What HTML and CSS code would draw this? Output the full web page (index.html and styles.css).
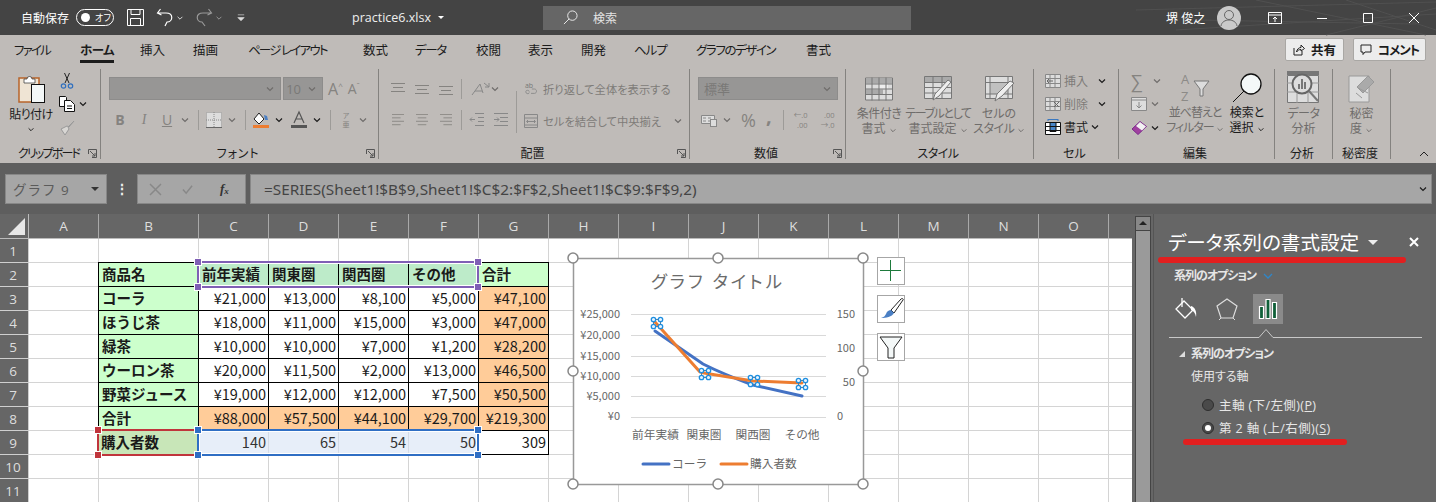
FILE: index.html
```html
<!DOCTYPE html>
<html lang="ja">
<head>
<meta charset="utf-8">
<title>practice6.xlsx - Excel</title>
<link rel="stylesheet" href="styles.css">
</head>
<body>
<svg class="sprite" aria-hidden="true">
  <symbol id="chev" viewBox="0 0 10 6"><path d="M2 1.500l3 3 3-3" fill="none" stroke="currentColor" stroke-width="1.200"/></symbol>
  <symbol id="launch" viewBox="0 0 9 9"><path d="M.5 5V.5H8.500V8.500H4M2 2l5 5M7 4v3H4" fill="none" stroke="currentColor"/></symbol>
  <symbol id="al-top" viewBox="0 0 14 12"><path d="M0 .5h14M2 4.500h10M0 8.500h14" stroke="currentColor"/></symbol>
  <symbol id="al-mid" viewBox="0 0 14 12"><path d="M0 2.500h14M2 6.500h10M0 10.500h14" stroke="currentColor"/></symbol>
  <symbol id="al-bot" viewBox="0 0 14 12"><path d="M0 3.500h14M2 7.500h10M0 11.500h14" stroke="currentColor"/></symbol>
  <symbol id="al-l" viewBox="0 0 14 14"><path d="M0 .5h14M0 4.500h10M0 8.500h14M0 12.500h10" stroke="currentColor"/></symbol>
  <symbol id="al-c" viewBox="0 0 14 14"><path d="M0 .5h14M2 4.500h10M0 8.500h14M2 12.500h10" stroke="currentColor"/></symbol>
  <symbol id="al-r" viewBox="0 0 14 14"><path d="M0 .5h14M4 4.500h10M0 8.500h14M4 12.500h10" stroke="currentColor"/></symbol>
</svg>

<header class="titlebar">
  <svg class="tb-lines" viewBox="0 0 300 35" aria-hidden="true"><path d="M0 10L300 2M40 30L300 14M120 0L290 35M190 35L300 8M60 20L280 24M210 0L300 30" stroke="#505050" fill="none"/></svg>
  <span class="tb-auto">自動保存</span>
  <span class="toggle"><i></i><b>オフ</b></span>
  <svg class="tb-save" viewBox="0 0 17 17"><path d="M.5.5h16v16H.5zM4 .5v5h9v-5M3.500 16.500v-7h10v7" fill="none" stroke="#fff"/></svg>
  <svg class="tb-undo" viewBox="0 0 17 19"><path d="M4.500 1L1.500 5l4 2M2 5h8c8 0 7 9 1 9l-2 4" fill="none" stroke="#fff" stroke-width="1.200"/></svg>
  <svg class="chev-s tb-c1"><use href="#chev"/></svg>
  <svg class="tb-redo" viewBox="0 0 17 19"><path d="M12.500 1l3 4-4 2M15 5H7c-8 0-7 9-1 9l3 4" fill="none" stroke="#999" stroke-width="1.200"/></svg>
  <svg class="chev-s tb-c2"><use href="#chev"/></svg>
  <svg class="tb-custom" viewBox="0 0 10 9"><path d="M1 .5h8M1 4l4 4 4-4z" stroke="#ddd" fill="#ddd" stroke-width=".8"/></svg>
  <span class="tb-file">practice6.xlsx</span>
  <i class="caret tb-caret"></i>
  <div class="search">
    <svg viewBox="0 0 16 16"><circle cx="10" cy="6" r="5" fill="none" stroke="#eee"/><path d="M6.500 9.500L1 15" stroke="#eee"/></svg>
    <span>検索</span>
  </div>
  <span class="tb-user">堺 俊之</span>
  <span class="avatar"><svg viewBox="0 0 24 24"><circle cx="12" cy="9" r="4.500" fill="none" stroke="#666"/><path d="M4 20c1-8 15-8 16 0" fill="none" stroke="#666"/></svg></span>
  <svg class="win win-ribbon" viewBox="0 0 14 12"><path d="M.5.5h13v11H.5zM.5 3h13M7 10V5M5 7l2-2 2 2" fill="none" stroke="#fff"/></svg>
  <svg class="win win-min" viewBox="0 0 10 10"><path d="M0 5.500h10" stroke="#fff"/></svg>
  <svg class="win win-max" viewBox="0 0 10 10"><path d="M.5.5h9v9h-9z" fill="none" stroke="#fff"/></svg>
  <svg class="win win-close" viewBox="0 0 10 10"><path d="M0 0l10 10M10 0L0 10" stroke="#fff"/></svg>
</header>

<nav class="tabs">
  <div class="tablist">
    <span class="ls4">ファイル</span><span class="active ls1">ホーム</span><span>挿入</span><span>描画</span><span class="ls4">ページ レイアウト</span><span>数式</span><span class="ls3">データ</span><span>校閲</span><span>表示</span><span>開発</span><span class="ls2">ヘルプ</span><span class="ls3">グラフのデザイン</span><span>書式</span>
  </div>
  <button class="tbtn share"><svg viewBox="0 0 12 12"><path d="M1 4v7h8V7M3.500 8C4 5 6 3.500 8 3.500V1l3.500 3.500L8 7V5.500C6 5.500 4.500 6.500 3.500 8z" fill="none" stroke="#222"/></svg>共有</button>
  <button class="tbtn comment"><svg viewBox="0 0 12 12"><path d="M1 1h10v7H5L3 10.500V8H1z" fill="none" stroke="#222"/></svg><span class="ls2">コメント</span></button>
</nav>

<section class="ribbon">
  <div class="group">
    <div class="gbody clip">
      <div class="bigbtn paste">
        <svg class="ic-paste" viewBox="0 0 27 30"><rect x="1" y="5" width="20" height="24" fill="#efe4d4" stroke="#b8642a" stroke-width="1.500"/><path d="M6 6h3a2.500 2.500 0 0 1 5 0h3v4H6z" fill="#fff" stroke="#444" stroke-width=".8"/><rect x="13.500" y="11.500" width="13" height="18" fill="#f4f8f8" stroke="#111"/></svg>
        <span class="on ls1">貼り付け</span>
        <svg class="chev-s on"><use href="#chev"/></svg>
      </div>
      <div class="clipcol">
        <div class="rowline"><svg class="ic16" viewBox="0 0 16 16"><path d="M5.500 0L10 10M10.500 0L6 10" stroke="#222" fill="none"/><circle cx="4.500" cy="13" r="2.200" fill="none" stroke="#2f6fbf" stroke-width="1.200"/><circle cx="11.500" cy="13" r="2.200" fill="none" stroke="#2f6fbf" stroke-width="1.200"/></svg></div>
        <div class="rowline"><svg class="ic16" viewBox="0 0 16 16"><path d="M.5.5h6l1 1v9h-7z" fill="#fff" stroke="#111"/><path d="M5.500 4.500h6l4 4v7h-10z" fill="#fff" stroke="#111"/><path d="M8 10h5M8 12.500h5" stroke="#111"/></svg><svg class="chev-s on ml3"><use href="#chev"/></svg></div>
        <div class="rowline"><svg class="ic16" viewBox="0 0 16 16"><path d="M15 1l-5 6-2-1-6 3 4 6 4-6-1-2z" fill="#d8d6d3" stroke="#999"/></svg></div>
      </div>
    </div>
    <div class="glabel"><span></span><span class="on ls4">クリップボード</span><svg class="launch"><use href="#launch"/></svg></div>
  </div>

  <div class="group">
    <div class="gbody pad8">
      <div class="frow r1">
        <div class="select w172"><svg class="chev-s"><use href="#chev"/></svg></div>
        <div class="select w40 ml2"><span class="seltxt">10</span><svg class="chev-s"><use href="#chev"/></svg></div>
        <span class="bigA ml5">A<sup>^</sup></span>
        <span class="midA ml5">A<sup>ˇ</sup></span>
      </div>
      <div class="frow r2 pl3">
        <b class="glyph w16">B</b>
        <i class="glyph w16 ml8 serif">I</i>
        <u class="glyph w16 ml7">U</u>
        <svg class="chev-s ml5"><use href="#chev"/></svg>
        <i class="vsep ml8"></i>
        <svg class="ic16 ml7" viewBox="0 0 16 16"><path d="M.5.5h15v15H.5z" fill="#ddd" stroke="#999" stroke-dasharray="1 1"/><path d="M0 15.500h16" stroke="#666"/><path d="M8 0v16M0 8h16" stroke="#888" stroke-dasharray="1 1"/></svg>
        <svg class="chev-s ml5"><use href="#chev"/></svg>
        <i class="vsep ml8"></i>
        <svg class="ic16 ml7" viewBox="0 0 16 16"><path d="M6 1L1 7l5 5 5-5z" fill="#fff" stroke="#222"/><path d="M11 3l3 1 1 4h-3z" fill="#4a7fc4"/><rect y="13" width="16" height="3" fill="#ed7d31"/></svg>
        <svg class="chev-s on ml5"><use href="#chev"/></svg>
        <svg class="ic16 ml7" viewBox="0 0 16 16"><path d="M3 11L8 0l5 11M5 7h6" fill="none" stroke="#555" stroke-width="1.200"/><rect y="13" width="16" height="3" fill="#555"/></svg>
        <svg class="chev-s on ml5"><use href="#chev"/></svg>
        <i class="vsep ml8"></i>
        <span class="furi ml8">ア<br>亜</span>
        <svg class="chev-s ml5"><use href="#chev"/></svg>
      </div>
    </div>
    <div class="glabel"><span></span><span class="on wide">フォント</span><svg class="launch"><use href="#launch"/></svg></div>
  </div>

  <div class="group">
    <div class="gbody pad8 algn">
      <div class="al-left">
        <div class="frow r1">
          <svg class="alg"><use href="#al-top"/></svg><svg class="alg ml10"><use href="#al-mid"/></svg><svg class="alg ml10"><use href="#al-bot"/></svg>
          <i class="vsep ml8"></i>
          <svg class="ic20 ml8" viewBox="0 0 20 16"><path d="M2 14L10 3l3 9M5 10h7" fill="none" stroke="#888"/><path d="M14 2l5 4M19 2v4h-4" fill="none" stroke="#888"/></svg>
          <svg class="chev-s"><use href="#chev"/></svg>
        </div>
        <div class="frow r2">
          <svg class="alg"><use href="#al-l"/></svg><svg class="alg ml10"><use href="#al-c"/></svg><svg class="alg ml10"><use href="#al-r"/></svg>
          <i class="vsep ml8"></i>
          <svg class="ic14 ml8" viewBox="0 0 14 14"><path d="M5 .5h9M8 4.500h6M8 8.500h6M5 12.500h9M5 6.500H0M2 4.500l-2 2 2 2" fill="none" stroke="#888"/></svg>
          <svg class="ic14 ml10" viewBox="0 0 14 14"><path d="M0 .5h14M6 4.500h8M6 8.500h8M0 12.500h14M0 6.500h5M3 4.500l2 2-2 2" fill="none" stroke="#888"/></svg>
        </div>
      </div>
      <i class="vsep tall"></i>
      <div class="al-right">
        <div class="wrapline"><svg class="ic14" viewBox="0 0 14 16"><text x="0" y="7" class="mini">ab</text><path d="M1 11c0-2 4-2 4 0M1 11c0 3 4 3 4 1M7 13h4c3 0 3-5 0-5H8" fill="none" stroke="#888"/></svg><span>折り返して全体を表示する</span></div>
        <div class="wrapline"><svg class="ic14" viewBox="0 0 14 14"><path d="M.5.5h13v13H.5zM0 4h14M0 11h14M3 7.500h8M4 6L2.500 7.500 4 9M10 6l1.500 1.500L10 9" fill="none" stroke="#888"/></svg><span>セルを結合して中央揃え</span><svg class="chev-s ml7"><use href="#chev"/></svg></div>
      </div>
    </div>
    <div class="glabel"><span></span><span class="on">配置</span><svg class="launch"><use href="#launch"/></svg></div>
  </div>

  <div class="group">
    <div class="gbody pad8">
      <div class="frow r1"><div class="select w140 lefttxt"><span class="seltxt">標準</span><svg class="chev-s"><use href="#chev"/></svg></div></div>
      <div class="frow r2 pl3">
        <svg class="ic16" viewBox="0 0 16 14"><path d="M.5 2.500h13v8H.5z" fill="#ddd" stroke="#888"/><path d="M2 5h3M2 8h3M7 5h3M7 8h2" stroke="#888"/><rect x="9.500" y="6.500" width="6" height="7" fill="#ddd" stroke="#888"/></svg>
        <svg class="chev-s ml5"><use href="#chev"/></svg>
        <span class="pct">%</span>
        <span class="comma">,</span>
        <i class="vsep sep-num"></i>
        <span class="dec ml8">←.0<br>.00</span>
        <span class="dec dec2">.00<br>→.0</span>
      </div>
    </div>
    <div class="glabel"><span></span><span class="on">数値</span><svg class="launch"><use href="#launch"/></svg></div>
  </div>

  <div class="group">
    <div class="gbody styles">
      <div class="bigbtn w60">
        <svg class="ic-big" viewBox="0 0 28 23"><path d="M.5.500h27v22H.5z" fill="#ddd" stroke="#777"/><path d="M1 1h26v5H1zM1 12h17v5H1z" fill="#aaa"/><path d="M14 6.500h9v5h-9z" fill="#eee"/><path d="M0 6.500h28M0 11.500h28M0 17h28M7 0v23M14 0v23M21 0v23" stroke="#777" fill="none"/></svg>
        <span class="ls1">条件付き</span><span>書式 <svg class="chev-s"><use href="#chev"/></svg></span>
      </div>
      <div class="bigbtn w58">
        <svg class="ic-big" viewBox="0 0 28 26"><path d="M.5.500h27v22H.5z" fill="#ddd" stroke="#777"/><path d="M1 1h26v5H1z" fill="#aaa"/><path d="M0 6.500h28M0 11.500h28M0 17h28M9 0v23M18 0v23" stroke="#777" fill="none"/><path d="M27 6L15 20l-6 4 2-6L24 4z" fill="#eee" stroke="#777"/></svg>
        <span class="ls3">テーブルとして</span><span>書式設定 <svg class="chev-s"><use href="#chev"/></svg></span>
      </div>
      <div class="bigbtn w64">
        <svg class="ic-big" viewBox="0 0 28 26"><path d="M.5.500h27v22H.5z" fill="#ddd" stroke="#777"/><path d="M5 6h18v12H5z" fill="#c0c0c0"/><path d="M0 6.500h28M5 0v23M23 0v23M0 18h28" stroke="#777" fill="none"/><path d="M29 7L17 20l-7 5 2-7L25 5z" fill="#eee" stroke="#777"/></svg>
        <span>セルの</span><span class="ls1">スタイル <svg class="chev-s"><use href="#chev"/></svg></span>
      </div>
    </div>
    <div class="glabel"><span></span><span class="on ls1">スタイル</span><span></span></div>
  </div>

  <div class="group">
    <div class="gbody cells">
      <div class="cellrow"><svg class="ic16" viewBox="0 0 16 14"><path d="M.5.500h15v13H.5zM0 4.500h16M0 9.500h16M5 0v14M10 0v14" fill="#ddd" stroke="#888"/><path d="M8 7H2M4 5L2 7l2 2" stroke="#666" fill="none"/></svg><span>挿入</span><svg class="chev-s on"><use href="#chev"/></svg></div>
      <div class="cellrow"><svg class="ic16" viewBox="0 0 16 14"><path d="M.5.500h15v13H.5zM0 4.500h16M0 9.500h16M5 0v14M10 0v14" fill="#ddd" stroke="#888"/><path d="M9 5l5 5M14 5l-5 5" stroke="#666" fill="none"/></svg><span>削除</span><svg class="chev-s on"><use href="#chev"/></svg></div>
      <div class="cellrow on"><svg class="ic16" viewBox="0 0 16 16"><path d="M.5 3.500h15v12H.5z" fill="#fff" stroke="#111"/><path d="M5 3.500h6v9H5z" fill="#4a86c8" stroke="#111"/><path d="M0 7.500h16M0 11.500h16" stroke="#111"/><path d="M3 .5h10M3 0v2M13 0v2" stroke="#3a78c0"/></svg><span>書式</span><svg class="chev-s on cshift"><use href="#chev"/></svg></div>
    </div>
    <div class="glabel"><span></span><span class="on">セル</span><span></span></div>
  </div>

  <div class="group">
    <div class="gbody edit">
      <div class="editcol">
        <div class="rowline"><span class="sigma">∑</span><svg class="chev-s ml5"><use href="#chev"/></svg></div>
        <div class="rowline"><svg class="ic16" viewBox="0 0 16 14"><path d="M.5.500h15v13H.5z" fill="#ddd" stroke="#888"/><path d="M0 3h16" stroke="#888"/><path d="M8 5v6M5.500 8.500L8 11l2.500-2.500" stroke="#888" fill="none"/></svg><svg class="chev-s ml3"><use href="#chev"/></svg></div>
        <div class="rowline"><svg class="ic16" viewBox="0 0 16 14"><path d="M9 .5l6.500 5L7 13.500 1 8z" fill="#a040a0" stroke="#7a2a8a"/><path d="M9 1l6 4.500-4 4-6-4.500z" fill="#f2f2f2"/></svg><svg class="chev-s on ml3"><use href="#chev"/></svg></div>
      </div>
      <div class="bigbtn w60">
        <svg class="ic-sort" viewBox="0 0 30 28"><text x="1" y="11" class="az">A</text><text x="1" y="28" class="az">Z</text><path d="M14 8h15l-6 8v7h-3v-7z" fill="#ddd" stroke="#777"/></svg>
        <span class="ls2">並べ替えと</span><span class="ls2">フィルター <svg class="chev-s"><use href="#chev"/></svg></span>
      </div>
      <div class="bigbtn w44 on">
        <svg class="ic-find" viewBox="0 0 30 30"><circle cx="19" cy="11" r="10" fill="#f4f8f8" stroke="#111" stroke-width="1.300"/><path d="M12 18L1 29" stroke="#111"/></svg>
        <span>検索と</span><span>選択 <svg class="chev-s"><use href="#chev"/></svg></span>
      </div>
    </div>
    <div class="glabel"><span></span><span class="on">編集</span><span></span></div>
  </div>

  <div class="group">
    <div class="gbody single">
      <div class="bigbtn">
        <svg class="ic-ana" viewBox="0 0 32 32"><path d="M.5 4.500h31v27H.5z" fill="#ddd" stroke="#777"/><rect width="32" height="4" fill="#777"/><path d="M0 12h32M0 21h32M10 4v28M21 4v28" stroke="#999"/><circle cx="15" cy="13" r="9.500" fill="#ddd" stroke="#666" stroke-width="2"/><path d="M11 18v-5h2v5zM14 18V8h2v10zM17 18v-7h2v7z" fill="#777"/><path d="M22 20l9 10" stroke="#777" stroke-width="2"/></svg>
        <span class="ls1">データ</span><span>分析</span>
      </div>
    </div>
    <div class="glabel"><span></span><span class="on">分析</span><span></span></div>
  </div>

  <div class="group">
    <div class="gbody single">
      <div class="bigbtn">
        <svg class="ic-sec" viewBox="0 0 28 29"><path d="M1 3h20v26H1z" fill="#ddd" stroke="#999"/><path d="M9 14L20 3l6 6-11 11z" fill="#aaa" stroke="#999"/><path d="M10 15l10 5M8 20l6 5" stroke="#999"/></svg>
        <span>秘密</span><span>度 <svg class="chev-s"><use href="#chev"/></svg></span>
      </div>
    </div>
    <div class="glabel"><span></span><span class="on">秘密度</span><span></span></div>
  </div>

  <svg class="collapse" viewBox="0 0 10 6"><path d="M1 5l4-4 4 4" fill="none" stroke="#222"/></svg>
</section>

<section class="formula">
  <div class="namebox"><span>グラフ 9</span><i class="caret dark"></i></div>
  <span class="fdots">⋮</span>
  <div class="fbtns">
    <svg viewBox="0 0 10 10"><path d="M0 0l10 10M10 0L0 10" stroke="#888" stroke-width="1.300"/></svg>
    <svg viewBox="0 0 12 10"><path d="M1 5l3.500 4L11 1" fill="none" stroke="#888" stroke-width="1.600"/></svg>
    <span class="fx">f<sub>x</sub></span>
  </div>
  <div class="finput"><span>=SERIES(Sheet1!$B$9,Sheet1!$C$2:$F$2,Sheet1!$C$9:$F$9,2)</span><svg class="chev-s on"><use href="#chev"/></svg></div>
</section>

<main class="workspace">
  <div class="sheet">
    <div class="colheads">
      <div class="corner"><i></i></div>
      <span>A</span><span class="wb">B</span><span>C</span><span>D</span><span>E</span><span>F</span><span>G</span><span>H</span><span>I</span><span>J</span><span>K</span><span>L</span><span>M</span><span>N</span><span>O</span><span class="rest"></span>
    </div>
    <div class="sheetbody">
      <div class="rowheads">
        <span>1</span><span>2</span><span>3</span><span>4</span><span>5</span><span>6</span><span>7</span><span>8</span><span>9</span><span>10</span><span>11</span>
      </div>
      <div class="cells-area">
        <div class="gridcols">
          <i></i><i class="wb"></i><i></i><i></i><i></i><i></i><i></i><i></i><i></i><i></i><i></i><i></i><i></i><i></i><i></i>
        </div>
        <div class="table">
          <div class="c lab top">商品名</div><div class="c lab top sel-p">前年実績</div><div class="c lab top sel-p">関東圏</div><div class="c lab top sel-p">関西圏</div><div class="c lab top sel-p">その他</div><div class="c lab top">合計</div>
          <div class="c lab">コーラ</div><div class="c num">¥21,000</div><div class="c num">¥13,000</div><div class="c num">¥8,100</div><div class="c num">¥5,000</div><div class="c num or">¥47,100</div>
          <div class="c lab">ほうじ茶</div><div class="c num">¥18,000</div><div class="c num">¥11,000</div><div class="c num">¥15,000</div><div class="c num">¥3,000</div><div class="c num or">¥47,000</div>
          <div class="c lab">緑茶</div><div class="c num">¥10,000</div><div class="c num">¥10,000</div><div class="c num">¥7,000</div><div class="c num">¥1,200</div><div class="c num or">¥28,200</div>
          <div class="c lab">ウーロン茶</div><div class="c num">¥20,000</div><div class="c num">¥11,500</div><div class="c num">¥2,000</div><div class="c num">¥13,000</div><div class="c num or">¥46,500</div>
          <div class="c lab">野菜ジュース</div><div class="c num">¥19,000</div><div class="c num">¥12,000</div><div class="c num">¥12,000</div><div class="c num">¥7,500</div><div class="c num or">¥50,500</div>
          <div class="c lab">合計</div><div class="c num or">¥88,000</div><div class="c num or">¥57,500</div><div class="c num or">¥44,100</div><div class="c num or">¥29,700</div><div class="c num or">¥219,300</div>
          <div class="c lab buy">購入者数</div><div class="c num sel-b">140</div><div class="c num sel-b">65</div><div class="c num sel-b">54</div><div class="c num sel-b">50</div><div class="c num">309</div>

          <div class="range r-purple"><i class="tl"></i><i class="tr"></i><i class="bl"></i><i class="br"></i></div>
          <div class="range r-red"><i class="tl"></i><i class="bl"></i></div>
          <div class="range r-blue"><i class="tl"></i><i class="tr"></i><i class="bl"></i><i class="br"></i></div>
        </div>

        <svg class="chart" viewBox="560 245 360 255" role="img" aria-label="グラフ">
          <rect x="573.500" y="258.500" width="290" height="226" fill="#fff" stroke="#999" stroke-width="1.500"/>
          <text x="718" y="288" class="ct-title" text-anchor="middle">グラフ タイトル</text>
          <path d="M631 314.500h195M631 335.500h195M631 356.500h195M631 376.500h195M631 396.500h195M631 417.500h195" stroke="#d9d9d9"/>
          <g class="ct-txt" text-anchor="end">
            <text x="620" y="318">¥25,000</text><text x="620" y="339">¥20,000</text><text x="620" y="360">¥15,000</text><text x="620" y="380">¥10,000</text><text x="620" y="400">¥5,000</text><text x="620" y="420">¥0</text>
          </g>
          <g class="ct-txt" text-anchor="end">
            <text x="855" y="318">150</text><text x="855" y="352">100</text><text x="855" y="386">50</text><text x="843" y="420">0</text>
          </g>
          <g class="ct-txt ct-x" text-anchor="middle">
            <text x="655.500" y="439">前年実績</text><text x="704" y="439">関東圏</text><text x="753" y="439">関西圏</text><text x="802" y="439">その他</text>
          </g>
          <path d="M655 331L703 364Q725 375 753 385L802 396" fill="none" stroke="#4472c4" stroke-width="3" stroke-linecap="round"/>
          <path d="M655 322L700 372Q702 373 704 373L753 381L802 383" fill="none" stroke="#ed7d31" stroke-width="3" stroke-linecap="round"/>
          <g class="markers">
            <path d="M653.500 319.500h7v7h-7zM701.500 370.500h7v7h-7zM750.500 377.500h7v7h-7zM798.500 380.500h7v7h-7z"/>
            <circle cx="653.500" cy="319.500" r="2.200"/><circle cx="660.500" cy="319.500" r="2.200"/><circle cx="653.500" cy="326.500" r="2.200"/><circle cx="660.500" cy="326.500" r="2.200"/>
            <circle cx="701.500" cy="370.500" r="2.200"/><circle cx="708.500" cy="370.500" r="2.200"/><circle cx="701.500" cy="377.500" r="2.200"/><circle cx="708.500" cy="377.500" r="2.200"/>
            <circle cx="750.500" cy="377.500" r="2.200"/><circle cx="757.500" cy="377.500" r="2.200"/><circle cx="750.500" cy="384.500" r="2.200"/><circle cx="757.500" cy="384.500" r="2.200"/>
            <circle cx="798.500" cy="380.500" r="2.200"/><circle cx="805.500" cy="380.500" r="2.200"/><circle cx="798.500" cy="387.500" r="2.200"/><circle cx="805.500" cy="387.500" r="2.200"/>
          </g>
          <path d="M643 464h26" stroke="#4472c4" stroke-width="3" stroke-linecap="round"/>
          <text x="672" y="468" class="ct-txt ct-l">コーラ</text>
          <path d="M721 464h26" stroke="#ed7d31" stroke-width="3" stroke-linecap="round"/>
          <text x="750" y="468" class="ct-txt ct-l">購入者数</text>
          <g class="handles">
            <circle cx="573" cy="258" r="5"/><circle cx="718" cy="258" r="5"/><circle cx="863" cy="258" r="5"/>
            <circle cx="573" cy="371" r="5"/><circle cx="863" cy="371" r="5"/>
            <circle cx="573" cy="484" r="5"/><circle cx="718" cy="484" r="5"/><circle cx="863" cy="484" r="5"/>
          </g>
          <g class="sidebtns">
            <rect x="877.500" y="257.500" width="27" height="27"/><rect x="877.500" y="295.500" width="27" height="27"/><rect x="877.500" y="333.500" width="27" height="27"/>
          </g>
          <path d="M880 270.500h21M890.500 260v21" stroke="#1e7a3c" fill="none"/>
          <path d="M901 299c1-1 3 0 2 1l-9 13-3-3z" fill="#fff" stroke="#222"/>
          <path d="M891 310l3 3c-2 4-8 5-13 5 3-1 4-2 5-4 1-3 3-4 5-4z" fill="#4a7fc4"/>
          <path d="M880 337h22l-8 11v10h-6v-10z" fill="#f4f8f8" stroke="#222"/>
        </svg>
      </div>
    </div>
  </div>

  <div class="vscroll"><div class="vs-up"></div><div class="vs-thumb"></div></div>

  <aside class="pane">
    <div class="pane-head">
      <h1>データ系列の書式設定</h1>
      <i class="caret light"></i>
      <svg class="pane-x" viewBox="0 0 10 10"><path d="M1 1l8 8M9 1L1 9" stroke="#fff" stroke-width="2"/></svg>
    </div>
    <div class="redline long"></div>
    <div class="pane-opt"><b class="ls2">系列のオプション</b><svg viewBox="0 0 10 6"><path d="M1 1l4 4 4-4" fill="none" stroke="#2f86c8" stroke-width="1.300"/></svg></div>
    <div class="pane-icons">
      <span class="pi"><svg viewBox="0 0 24 24"><path d="M10 4l9 9-8 8-9-9z" fill="none" stroke="#fff" stroke-width="1.300"/><path d="M8 1v9" stroke="#fff" stroke-width="1.300"/><path d="M17 9c4 1 6 6 5 11-1-4-2-6-5-7z" fill="#fff"/></svg></span>
      <span class="pi"><svg viewBox="0 0 24 24"><path d="M12 2l10 7-4 12H6L2 9z" fill="none" stroke="#ddd" stroke-width="1.200"/><path d="M6 21l-2 2M18 21l2 2" stroke="#ddd"/></svg></span>
      <span class="pi sel"><svg viewBox="0 0 20 22"><path d="M1.500 8.500h4v12h-4zM8 1.500h4v19H8zM14.500 4.500h4v16h-4z" fill="#0f5f38" stroke="#fff" stroke-width="1.200"/></svg></span>
    </div>
    <svg class="pane-rule" viewBox="0 0 253 9"><path d="M0 8.500h90l7-8 7 8h149" fill="none" stroke="#c8c8c8"/></svg>
    <div class="pane-sec"><i></i><b class="ls2">系列のオプション</b></div>
    <div class="pane-sub">使用する軸</div>
    <label class="radio"><i class="dot"></i><span>主軸 (下/左側)(<u>P</u>)</span></label>
    <label class="radio"><i class="dot on"></i><span>第 2 軸 (上/右側)(<u>S</u>)</span></label>
    <div class="redline short"></div>
  </aside>
</main>
</body>
</html>
```

FILE: styles.css
```css
* { box-sizing: border-box; }
html, body { margin: 0; padding: 0; }
body {
  width: 1436px;
  height: 502px;
  overflow: hidden;
  background: #666;
  font-family: "Open Sans", "Noto Sans CJK JP", sans-serif;
  font-size: 12px;
  color: #6f6d6b;
  font-feature-settings: "palt";
}
.sprite { display: none; }
svg { display: block; flex-shrink: 0; overflow: visible; }
.on { color: #1c1c1c; }
.chev-s { width: 10px; height: 6px; display: inline-block; color: #6f6d6b; }
.on .chev-s, .chev-s.on { color: #1c1c1c; }
.ml2 { margin-left: 2px; } .ml3 { margin-left: 3px; } .ml5 { margin-left: 5px; } .ml7 { margin-left: 7px; } .ml8 { margin-left: 8px; } .ml10 { margin-left: 10px; }
.ls1 { letter-spacing: -.5px; } .ls2 { letter-spacing: -1px; } .ls3 { letter-spacing: -1.400px; } .ls4 { letter-spacing: -1.800px; }
.wide { letter-spacing: .8px; }
.ic14 { width: 14px; height: 14px; }
.ic16 { width: 16px; height: 16px; }
.ic20 { width: 20px; height: 16px; }
.w16 { width: 16px; text-align: center; }
.caret { display: block; width: 0; height: 0; border: 4px solid transparent; border-bottom-width: 0; border-top-color: #fff; }

/* Title bar */
.titlebar { position: relative; height: 35px; background: #444; display: flex; align-items: center; color: #fff; }
.tb-lines { position: absolute; right: 0; top: 0; width: 300px; height: 35px; }
.titlebar > :not(.tb-lines) { position: relative; }
.tb-auto { margin-left: 21px; font-size: 12px; }
.toggle { margin-left: 7px; width: 38px; height: 17px; border: 1px solid #fff; border-radius: 9px; display: flex; align-items: center; padding-left: 4px; }
.toggle i { width: 9px; height: 9px; border-radius: 50%; background: #fff; }
.toggle b { margin-left: 5px; font-weight: 400; font-size: 9px; }
.tb-save { width: 17px; height: 17px; margin-left: 13px; }
.tb-undo { width: 17px; height: 19px; margin-left: 12px; }
.tb-c1 { margin-left: 3px; color: #ddd; width: 8px; }
.tb-redo { width: 17px; height: 19px; margin-left: 12px; }
.tb-c2 { margin-left: 2px; color: #999; width: 8px; }
.tb-custom { width: 8px; height: 8px; margin-left: 14px; }
.tb-file { margin-left: 107px; font-size: 12.500px; width: 85px; color: #eee; }
.tb-caret { border-width: 3px; border-bottom-width: 0; margin-left: 1px; }
.search { margin-left: 99px; width: 368px; height: 24px; background: #666; display: flex; align-items: center; padding-left: 20px; color: #e4e4e4; }
.search svg { width: 15px; height: 15px; }
.search span { margin-left: 15px; }
.tb-user { margin-left: 255px; width: 41px; font-size: 12px; white-space: nowrap; }
.avatar { margin-left: 10px; width: 24px; height: 24px; border-radius: 50%; background: #c9c9c9; }
.avatar svg { width: 24px; height: 24px; }
.win-ribbon { width: 14px; height: 12px; margin-left: 27px; }
.win-min, .win-max, .win-close { width: 10px; height: 10px; }
.win-min { margin-left: 35px; }
.win-max { margin-left: 36px; }
.win-close { margin-left: 36px; }

/* Tabs */
.tabs { height: 33px; background: #bfbbb8; display: flex; align-items: flex-start; padding-left: 14px; color: #1c1c1c; }
.tablist { display: grid; grid-template-columns: 66px 60px 53px 55px 115px 52px 61px 52px 53px 53px 62px 110px 30px; width: 1271px; font-size: 12.500px; line-height: 18px; padding-top: 7px; }
.tablist span { white-space: nowrap; }
.tablist .active { font-weight: 700; position: relative; }
.tablist .active::after { content: ""; position: absolute; left: 0; top: 18px; width: 34px; height: 3px; background: #1c1c1c; }
.tbtn { height: 23px; margin-top: 3px; border: 1px solid #a9a7a4; border-radius: 2px; background: #ececec; font: 700 12.500px "Noto Sans CJK JP", sans-serif; font-feature-settings: "palt"; color: #1c1c1c; display: flex; align-items: center; justify-content: center; gap: 6px; padding: 0; }
.tbtn svg { width: 12px; height: 12px; }
.share { width: 59px; }
.comment { width: 73px; margin-left: 9px; }

/* Ribbon */
.ribbon { position: relative; height: 95px; background: #bfbbb8; display: grid; grid-template-columns: 101px 278px 311px 156px 188px 85px 156px 58px 58px; align-items: start; }
.group { height: 90px; margin-top: 1px; border-right: 1px solid #84827f; display: grid; grid-template-rows: 77px 15px; }
.gbody { display: block; min-width: 0; }
.glabel { display: grid; grid-template-columns: 1fr auto 1fr; align-items: center; line-height: 15px; padding-right: 3px; }
.glabel span { white-space: nowrap; }
.launch { width: 9px; height: 9px; justify-self: end; color: #555; }
.collapse { position: absolute; right: 7px; bottom: 6px; width: 10px; height: 6px; }
.pad8 { padding: 8px 0 0 8px; }
.frow { display: flex; align-items: center; height: 23px; }
.r2 { margin-top: 8px; }
.pl3 { padding-left: 3px; }
.select { height: 23px; background: #979695; border: 1px solid #8d8c8b; display: flex; align-items: center; justify-content: flex-end; padding: 0 5px; gap: 6px; color: #7a7977; }
.lefttxt { justify-content: space-between; }
.seltxt { font-size: 13px; }
.w172 { width: 172px; }
.w40 { width: 40px; }
.w140 { width: 140px; }
.bigA { font-size: 16px; line-height: 16px; color: #858380; }
.midA { font-size: 14px; line-height: 16px; color: #858380; }
.bigA sup, .midA sup { font-size: 8px; vertical-align: 6px; line-height: 0; }
.glyph { font-size: 14px; color: #858380; line-height: 16px; }
.serif { font-family: "Liberation Serif", serif; }
.vsep { display: block; width: 1px; height: 20px; background: #9d9b98; }
.furi { font-size: 7px; line-height: 9px; width: 14px; text-align: center; color: #858380; }

/* Clipboard */
.clip { display: flex; }
.paste { width: 52px; margin-left: 5px; }
.ic-paste { width: 27px; height: 30px; margin: 4px 0 4px; }
.clipcol { margin-left: 2px; }
.rowline { height: 23.500px; display: flex; align-items: center; }

.bigbtn { display: flex; flex-direction: column; align-items: center; line-height: 15px; white-space: nowrap; flex-shrink: 0; }
.bigbtn span { display: block; }
.bigbtn .chev-s { width: 8px; height: 5px; }
.paste .chev-s { margin-top: 5px; }

/* Alignment */
svg.alg { width: 14px; height: 12px; color: #858380; }
.al-left { width: 129px; padding-left: 4px; }
.tall { height: 42px; margin-top: 14px; }
.gbody.algn { display: flex; padding: 8px 0 0 8px; align-items: flex-start; }
.al-right { margin: -4px 0 0 7px; font-size: 11.300px; }
.wrapline { display: flex; align-items: center; height: 32px; gap: 5px; white-space: nowrap; color: #7e7c79; }
.mini { font-size: 8px; fill: #777; }

/* Number */
.pct { margin-left: 9px; font-size: 18px; color: #858380; line-height: 20px; }
.comma { margin-left: 10px; font-size: 20px; font-weight: 700; line-height: 20px; color: #858380; position: relative; top: -4px; }
.sep-num { margin-left: 11px; }
.dec { font-size: 7.500px; line-height: 10px; color: #858380; text-align: right; width: 16px; }
.dec2 { margin-left: 11px; }

/* Styles */
.styles { display: flex; padding-left: 3px; }
.w60 { width: 60px; }
.w58 { width: 58px; }
.w64 { width: 64px; }
.w44 { width: 44px; }
.ic-big { width: 28px; height: 26px; margin: 7px 0 4px; }

/* Cells */
.cells { padding-left: 11px; }
.cellrow { display: flex; align-items: center; height: 23px; }
.cellrow span { margin-left: 3px; width: 28px; color: #7e7c79; }
.cellrow.on span { color: #1c1c1c; }
.cellrow .chev-s { margin-left: 5px; }
.cshift { transform: translateX(-7px); }

/* Editing */
.edit { display: flex; padding-left: 12px; }
.editcol { width: 34px; }
.sigma { font-size: 18px; width: 16px; line-height: 20px; color: #858380; }
.ic-sort { width: 30px; height: 28px; margin: 4px 0 4px; }
.ic-find { width: 30px; height: 30px; margin: 4px 0 2px; }
.az { font-size: 13px; fill: #8c8a87; }

/* Analysis, sensitivity */
.single { display: flex; justify-content: center; }
.ic-ana { width: 32px; height: 32px; margin: 2px 0 2.500px; }
.ic-sec { width: 28px; height: 29px; margin: 4px 0 3.500px; }

/* Formula bar */
.formula { height: 51px; background: #5e5e5e; display: flex; align-items: flex-start; padding: 11px 0 0 5px; }
.namebox { width: 102px; height: 30px; background: #a6a6a6; border: 1px solid #878787; display: flex; align-items: center; justify-content: space-between; padding: 0 7px; font-size: 13.500px; letter-spacing: 1px; color: #5b5b5b; font-feature-settings: normal; }
.caret.dark { border-top-color: #333; }
.fdots { width: 30px; height: 30px; line-height: 30px; text-align: center; color: #eee; font-weight: 700; font-size: 14px; }
.fbtns { width: 109px; height: 30px; background: #a6a6a6; border: 1px solid #878787; display: flex; align-items: center; gap: 21px; padding-left: 12px; }
.fbtns svg { width: 11px; height: 11px; }
.fx { font-family: "Liberation Serif", serif; font-style: italic; font-weight: 700; font-size: 13px; color: #333; margin-left: 6px; }
.fx sub { font-size: 9px; vertical-align: -1px; }
.finput { margin-left: 4px; width: 1182px; height: 30px; background: #a6a6a6; border: 1px solid #878787; display: flex; align-items: center; justify-content: space-between; padding: 0 3px 0 13px; font-family: "Noto Sans", "Open Sans", sans-serif; font-size: 15.300px; color: #444; }

/* Sheet */
.workspace { height: 288px; display: flex; align-items: flex-start; }
.sheet { width: 1132px; flex-shrink: 0; }
.colheads { height: 25px; display: flex; background: #666; color: #dedede; font-size: 13.500px; border-bottom: 1px solid #bbb; }
.corner { width: 29px; height: 24px; position: relative; border-right: 1px solid #bbb; }
.corner i { position: absolute; right: 3px; bottom: 3px; width: 0; height: 0; border-left: 17px solid transparent; border-bottom: 17px solid #e8e8e8; }
.colheads span { width: 70px; border-right: 1px solid #a9a9a9; text-align: center; line-height: 24px; }
.colheads .wb { width: 100px; }
.colheads .rest { width: 23px; border-right: 0; }
.sheetbody { display: flex; height: 263px; overflow: hidden; }
.rowheads { width: 29px; background: #666; color: #dedede; font-size: 13.500px; }
.rowheads span { display: block; height: 24px; line-height: 24px; text-align: center; border-bottom: 1px solid #cfcfcf; border-right: 1px solid #cfcfcf; padding-right: 2px; }
.cells-area { position: relative; width: 1103px; height: 264px; background: repeating-linear-gradient(to bottom, #fff 0 23px, #d4d4d4 23px 24px); }
.gridcols { position: absolute; inset: 0; display: flex; }
.gridcols i { display: block; width: 70px; border-right: 1px solid #d4d4d4; }
.gridcols .wb { width: 100px; }

.table { position: relative; margin: 23px 0 0 69px; width: 451px; display: grid; grid-template-columns: 101px repeat(5, 70px); grid-template-rows: 25px repeat(7, 24px); color: #1a1a1a; font-family: "Noto Sans CJK JP", sans-serif; font-feature-settings: normal; }
.c { border-right: 1px solid #000; border-bottom: 1px solid #000; background: #fff; font-size: 14.500px; line-height: 22px; white-space: nowrap; }
.top { border-top: 1px solid #000; }
.lab { background: #ccffcc; font-weight: 700; padding-left: 3px; }
.lab:nth-child(6n+1) { border-left: 1px solid #000; }
.num { text-align: right; padding-right: 2px; }
.or { background: #ffcc99; }
.sel-p { background: #bdebc9; }
.sel-b { background: #e7eef9; border-right-color: #d4dbe6; border-bottom: 0; color: #333; }
.buy { background: #c8e6b8; border: 0 !important; }
.range { position: absolute; }
.r-purple { grid-column: 2 / 6; grid-row: 1 / 2; inset: -1px 0 -1px -2px; border: 2px solid #7f5fb5; outline: 1px solid #fff; outline-offset: -3px; }
.r-red { grid-column: 1 / 2; grid-row: 8 / 9; inset: -2px 0 -1px -1px; border: 2px solid #c0353c; border-right: 0; }
.r-blue { grid-column: 2 / 6; grid-row: 8 / 9; inset: -2px 0 -1px -2px; border: 2px solid #2f6ec4; outline: 1px solid #fff; outline-offset: -3px; }
.range i { position: absolute; width: 6px; height: 6px; outline: 1px solid #fff; }
.r-purple i { background: #7f5fb5; }
.r-red i { background: #c0353c; }
.r-blue i { background: #2f6ec4; }
.tl { left: -4px; top: -4px; }
.tr { right: -4px; top: -4px; }
.bl { left: -4px; bottom: -4px; }
.br { right: -4px; bottom: -4px; }

.chart { position: absolute; left: 531px; top: 6px; width: 360px; height: 255px; }
.ct-title { font-size: 17.500px; fill: #6b6b6b; letter-spacing: 3px; font-family: "Noto Sans CJK JP", sans-serif; }
.ct-txt, .ct-txt text { font-size: 11px; fill: #666; font-family: "Noto Sans CJK JP", sans-serif; font-feature-settings: normal; }
.ct-x text { font-size: 11.700px; }
.ct-l { font-size: 11.700px; }
.markers path { stroke: #5a7a96; stroke-width: 1; fill: none; }
.markers circle { fill: #e6f3ff; stroke: #1f8fe0; stroke-width: 1.300; }
.handles circle { fill: #fff; stroke: #888; stroke-width: 1.500; }
.sidebtns rect { fill: #fff; stroke: #a6a6a6; }

/* Scrollbar */
.vscroll { width: 16px; height: 288px; margin: 2px 0 0 3px; border: 1px solid #444; border-bottom: 0; background: #666; display: flex; flex-direction: column; }
.vs-up { height: 14px; background: #888; position: relative; border-bottom: 1px solid #444; }
.vs-up::after { content: ""; position: absolute; left: 3px; top: 4px; border: 4px solid transparent; border-top: 0; border-bottom-color: #222; }
.vs-thumb { flex: 1; background: #9a9a9a; }

/* Task pane */
.pane { margin-left: 2px; width: 283px; height: 288px; background: #666; border-left: 1px solid #555; color: #e6e6e6; padding-top: 16px; position: relative; }
.pane-head { display: flex; align-items: center; height: 24px; padding-left: 14px; }
.pane-head h1 { margin: 0; width: 191px; font-size: 19.600px; font-weight: 400; line-height: 24px; color: #fff; white-space: nowrap; font-family: "Noto Sans CJK JP", sans-serif; }
.caret.light { border-width: 5px; border-bottom-width: 0; margin-left: 9px; border-top-color: #eee; }
.pane-x { width: 10px; height: 10px; margin-left: 31px; }
.redline { height: 6px; border-radius: 3px; background: #e21f1f; }
.long { width: 248px; margin: 3px 0 0 4px; }
.short { width: 164px; margin: 0 0 0 29px; }
.pane-opt { margin: 5px 0 0 20px; height: 16px; display: flex; align-items: center; gap: 7px; font-size: 12px; line-height: 16px; }
.pane-opt b, .pane-sec b { font-weight: 700; }
.pane-opt svg { width: 10px; height: 6px; }
.pane-icons { display: flex; margin: 10px 0 0 17px; }
.pi { display: flex; align-items: center; justify-content: center; width: 30px; height: 30px; margin-right: 11px; }
.pi svg { width: 24px; height: 24px; }
.pi.sel { background: #8a8a8a; margin-left: 0; }
.pi.sel svg { width: 20px; height: 22px; }
.pane-rule { width: 253px; height: 9px; margin: 5px 0 0 15px; }
.pane-sec { margin: 8px 0 0 25px; height: 16px; display: flex; align-items: center; gap: 6px; line-height: 16px; }
.pane-sec i { display: block; width: 0; height: 0; border-left: 6px solid transparent; border-bottom: 6px solid #ddd; }
.pane-sub { margin: 7px 0 0 37px; line-height: 16px; height: 16px; }
.radio { display: flex; align-items: center; height: 23px; margin-left: 48px; gap: 5px; font-size: 12.500px; letter-spacing: .4px; white-space: nowrap; color: #e6e6e6; }
.pane-sub + .radio { margin-top: 8px; }
.dot { display: block; width: 12px; height: 12px; border-radius: 50%; background: #4a4a4a; border: 1px solid #2e2e2e; position: relative; }
.dot.on::after { content: ""; position: absolute; left: 2px; top: 2px; width: 6px; height: 6px; border-radius: 50%; background: #fff; }
```
